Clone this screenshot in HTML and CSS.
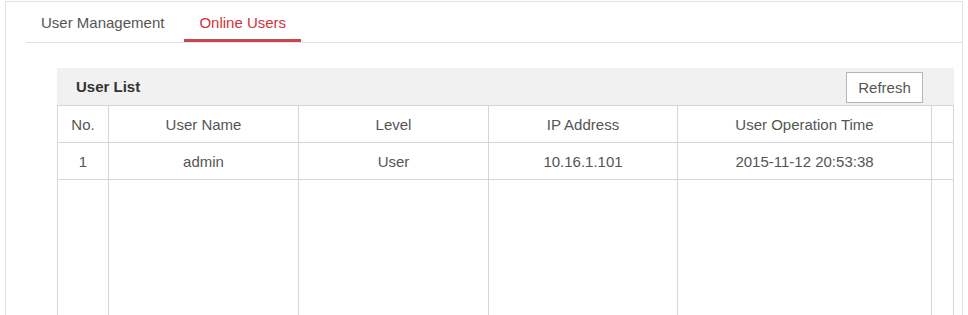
FILE: index.html
```html
<!DOCTYPE html>
<html lang="en">
<head>
    <meta charset="UTF-8">
    <title>Online Users</title>
    <link rel="stylesheet" href="styles.css">
</head>
<body>
    <div class="panel">
        <div class="tabs">
            <div class="tab">User Management</div>
            <div class="tab active">Online Users</div>
        </div>
        <div class="section">
            <div class="section-head">
                <span class="section-title">User List</span>
                <button class="btn">Refresh</button>
            </div>
            <table class="grid">
                <colgroup>
                    <col class="c-no">
                    <col class="c-name">
                    <col class="c-level">
                    <col class="c-ip">
                    <col class="c-time">
                    <col>
                </colgroup>
                <tr>
                    <td>No.</td>
                    <td>User Name</td>
                    <td>Level</td>
                    <td>IP Address</td>
                    <td>User Operation Time</td>
                    <td></td>
                </tr>
                <tr>
                    <td>1</td>
                    <td>admin</td>
                    <td>User</td>
                    <td>10.16.1.101</td>
                    <td>2015-11-12 20:53:38</td>
                    <td></td>
                </tr>
                <tr class="filler">
                    <td></td><td></td><td></td><td></td><td></td><td></td>
                </tr>
            </table>
        </div>
    </div>
</body>
</html>
```

FILE: styles.css
```css
body {
    margin: 0;
    background-color: #fff;
    font-family: "Liberation Sans", Arial, sans-serif;
    font-size: 15px;
    color: #555;
}
.panel {
    margin: 1px 5px 0 5px;
    height: 400px;
    border: 1px solid #e2e2e2;
}
.tabs {
    display: flex;
    margin-left: 20px;
    border-bottom: 1px solid #e0e0e0;
}
.tab {
    padding: 11px 15px 6px;
    margin-right: 5px;
    line-height: 20px;
    color: #555;
    border-bottom: 3px solid transparent;
}
.tab.active {
    color: #d3323a;
    border-bottom-color: #c9474c;
}
.section {
    margin: 25px 8px 0 51px;
}
.section-head {
    display: flex;
    align-items: center;
    justify-content: space-between;
    height: 37px;
    padding: 0 31px 0 19px;
    background-color: #f1f1f1;
}
.section-title {
    font-weight: bold;
    color: #333;
}
.btn {
    width: 77px;
    height: 31px;
    margin-top: 2px;
    font-family: inherit;
    font-size: 15px;
    color: #555;
    background-color: #fff;
    border: 1px solid #b5b5b5;
}
.grid {
    width: 100%;
    border-collapse: collapse;
    table-layout: fixed;
}
.grid td {
    height: 36px;
    padding: 0;
    text-align: center;
    border: 1px solid #d6d6d6;
}
.grid .filler td {
    height: 200px;
}
.c-no { width: 51px; }
.c-name { width: 190px; }
.c-level { width: 190px; }
.c-ip { width: 189px; }
.c-time { width: 254px; }
```
